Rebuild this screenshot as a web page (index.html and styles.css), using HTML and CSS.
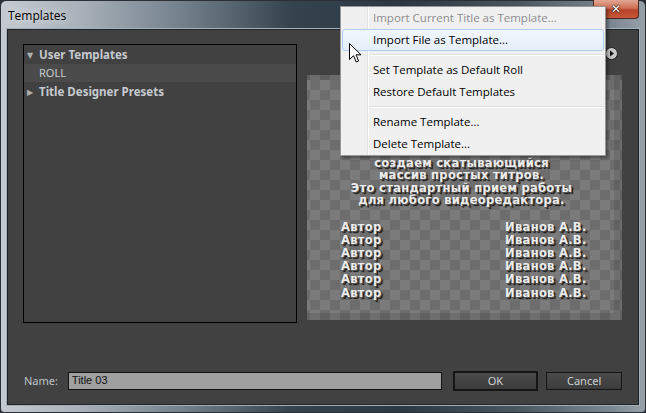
FILE: index.html
```html
<!DOCTYPE html>
<html lang="en">
<head>
    <meta charset="UTF-8">
    <title>Templates</title>
    <link rel="stylesheet" href="styles.css">
</head>
<body>
    <div class="window">
        <div class="titlebar">
            <span class="title">Templates</span>
            <button class="close-btn">✕</button>
        </div>

        <div class="client">
            <div class="main">
                <div class="tree">
                    <div class="tree-row group"><span class="arrow">▼</span>User Templates</div>
                    <div class="tree-row item selected">ROLL</div>
                    <div class="tree-row group"><span class="arrow">▶</span>Title Designer Presets</div>
                </div>

                <div class="side">
                    <div class="toolbar">
                        <span class="play-btn">
                            <svg width="13" height="13" viewBox="0 0 13 13">
                                <circle cx="6.5" cy="6.5" r="6" fill="#c8c8c8" stroke="#222" stroke-width="1"/>
                                <path d="M5 3.5 L9 6.5 L5 9.5 Z" fill="#111"/>
                            </svg>
                        </span>
                    </div>
                    <div class="preview">
                        <div class="preview-text">
                            <p>создаем скатывающийся</p>
                            <p>массив простых титров.</p>
                            <p>Это стандартный прием работы</p>
                            <p>для любого видеоредактора.</p>
                        </div>
                        <div class="credits">
                            <span>Автор</span><span>Иванов А.В.</span>
                            <span>Автор</span><span>Иванов А.В.</span>
                            <span>Автор</span><span>Иванов А.В.</span>
                            <span>Автор</span><span>Иванов А.В.</span>
                            <span>Автор</span><span>Иванов А.В.</span>
                            <span>Автор</span><span>Иванов А.В.</span>
                        </div>
                    </div>
                </div>
            </div>

            <div class="footer">
                <label class="name-label">Name:</label>
                <div class="name-input">Title 03</div>
                <button class="btn default">OK</button>
                <button class="btn">Cancel</button>
            </div>
        </div>

        <!-- context menu opened over the dialog -->
        <div class="menu">
            <div class="menu-item disabled">Import Current Title as Template...</div>
            <div class="menu-item hover">Import File as Template...</div>
            <div class="menu-sep"></div>
            <div class="menu-item">Set Template as Default Roll</div>
            <div class="menu-item">Restore Default Templates</div>
            <div class="menu-sep"></div>
            <div class="menu-item">Rename Template...</div>
            <div class="menu-item">Delete Template...</div>
        </div>

        <svg class="cursor" width="13" height="21" viewBox="0 0 13 21">
            <path d="M0.5 0.5 L0.5 16.5 L4.5 12.7 L7.2 19 L9.6 18 L7 11.8 L12 11.8 Z" fill="#fff" stroke="#000" stroke-width="1" stroke-linejoin="miter"/>
        </svg>
    </div>
</body>
</html>
```

FILE: styles.css
```css
/* Templates dialog */
body {
    margin: 0;
    width: 646px;
    height: 413px;
    overflow: hidden;
    background-color: #2a2f35;
    font-family: 'Noto Sans', 'DejaVu Sans', sans-serif;
}

.window {
    position: relative;
    width: 646px;
    height: 413px;
    box-sizing: border-box;
    border: 1px solid #2b3036;
    border-radius: 6px 6px 4px 4px;
    padding: 0 6px 7px 6px;
    background: linear-gradient(90deg, #c4cad0 0%, #a9b2ba 12%, #6d7a86 30%, #35434f 45%, #2b3945 62%, #49555f 80%, #7c8893 95%, #96a0a8 100%);
}

.titlebar {
    height: 28px;
    display: flex;
    align-items: flex-start;
    justify-content: space-between;
}

.title {
    margin: 6px 0 0 1px;
    font-family: 'Open Sans', 'Noto Sans', sans-serif;
    font-size: 12px;
    color: #000;
    text-shadow: 0 0 8px rgba(255, 255, 255, 0.9);
}

.close-btn {
    flex: 0 0 46px;
    width: 46px;
    height: 19px;
    margin: -1px 0 0 0;
    border: 1px solid #4b2a22;
    border-top: none;
    border-radius: 0 0 4px 4px;
    background: linear-gradient(180deg, #e0a896 0%, #cf6f52 45%, #b4432a 55%, #c8583a 100%);
    color: #fff;
    font-family: 'DejaVu Sans', sans-serif;
    font-size: 12px;
    font-weight: bold;
    line-height: 17px;
    padding: 0;
    text-shadow: 0 0 2px #000, 0 0 1px #000;
}

.client {
    height: 376px;
    box-sizing: border-box;
    background-color: #414141;
    border: 1px solid #1f2429;
    box-shadow: 0 0 0 1px #a6b0ba;
    padding: 14px 16px 0 15px;
}

.main {
    display: flex;
    gap: 10px;
}

.tree {
    width: 275px;
    height: 279px;
    box-sizing: border-box;
    border: 1px solid #000;
    background-color: #414141;
    padding-top: 1px;
}

.tree-row {
    height: 18px;
    line-height: 18px;
    font-size: 11.5px;
    color: #c6cacf;
}

.tree-row.group {
    font-weight: bold;
    padding-left: 3px;
}

.tree-row.item {
    padding-left: 15px;
    font-size: 11px;
}

.tree-row.selected {
    background-color: #4b4b4b;
    height: 18px;
}

.tree-row:last-child {
    height: 20px;
    line-height: 20px;
}

.arrow {
    display: inline-block;
    width: 12px;
    font-size: 8px;
    color: #b0b0b0;
    vertical-align: top;
}

.side {
    width: 316px;
    display: flex;
    flex-direction: column;
}

.toolbar {
    height: 31px;
    display: flex;
    justify-content: flex-end;
    align-items: flex-start;
}

.play-btn {
    display: block;
    margin: 3px 4px 0 0;
}

.play-btn svg {
    display: block;
}

.preview {
    height: 245px;
    box-sizing: border-box;
    background-color: #6d6d6d;
    background-image:
        conic-gradient(#7b7b7b 25%, transparent 0 50%, #7b7b7b 0 75%, transparent 0);
    background-size: 20px 20px;
    background-position: 3px 5px;
    box-shadow: inset 0 5px 0 rgba(0, 0, 0, 0.12), inset -8px -7px 0 rgba(0, 0, 0, 0.1);
    padding-top: 82px;
    font-family: 'DejaVu Sans', sans-serif;
    font-weight: bold;
    font-size: 11.5px;
    letter-spacing: 0.3px;
    color: #ececec;
    text-shadow: 1px 1px 0 #555, 2px 2px 1px #111;
}

.preview-text p {
    margin: 0;
    text-align: center;
    line-height: 12.4px;
    padding-right: 6px;
}

.credits {
    margin-top: 14px;
    padding-left: 34px;
    display: grid;
    grid-template-columns: 164px auto;
    line-height: 13.2px;
}

.footer {
    display: flex;
    align-items: center;
    margin-top: 48px;
    height: 19px;
}

.name-label {
    width: 44px;
    padding-left: 1px;
    font-size: 11px;
    color: #bfc3c7;
}

.name-input {
    width: 375px;
    height: 18px;
    box-sizing: border-box;
    border: 1px solid #111;
    background-color: #a0a0a0;
    font-family: 'Liberation Sans', sans-serif;
    font-size: 11px;
    line-height: 15px;
    padding-left: 3px;
    color: #111;
}

.btn {
    width: 76px;
    height: 18px;
    box-sizing: border-box;
    margin-left: 11px;
    border: 1px solid #151515;
    background: linear-gradient(180deg, #4a4a4a, #3c3c3c);
    color: #ccd0d3;
    font-family: 'Noto Sans', sans-serif;
    font-size: 11px;
    padding: 0;
}

.btn.default {
    width: 86px;
    height: 20px;
    border-width: 2px;
}

.btn.default + .btn {
    margin-left: 8px;
}

.menu {
    position: absolute;
    left: 339px;
    top: 5px;
    width: 266px;
    box-sizing: border-box;
    border: 1px solid #979797;
    background-color: #f0f0f0;
    padding: 0 1px;
    box-shadow: 2px 2px 3px rgba(0, 0, 0, 0.4);
    background-image: linear-gradient(90deg, transparent 26px, #e2e3e3 26px, #e2e3e3 27px, #fff 27px, #fff 28px, transparent 28px);
    font-family: 'Open Sans', 'Noto Sans', sans-serif;
    font-size: 11.5px;
}

.menu-item {
    height: 22px;
    line-height: 22px;
    padding-left: 31px;
    color: #000;
    box-sizing: border-box;
}

.menu-item.disabled {
    color: #8d8d8d;
}

.menu-item.hover {
    border: 1px solid #aeccee;
    border-radius: 3px;
    background: linear-gradient(180deg, #f2f7fd, #e5eef9);
    line-height: 20px;
    padding-left: 30px;
}

.menu-sep {
    height: 8px;
    margin-left: 28px;
    background: linear-gradient(180deg, transparent 3px, #e0e0e0 3px, #e0e0e0 4px, #fff 4px, #fff 5px, transparent 5px);
}

.cursor {
    position: absolute;
    left: 348px;
    top: 42px;
}
```
